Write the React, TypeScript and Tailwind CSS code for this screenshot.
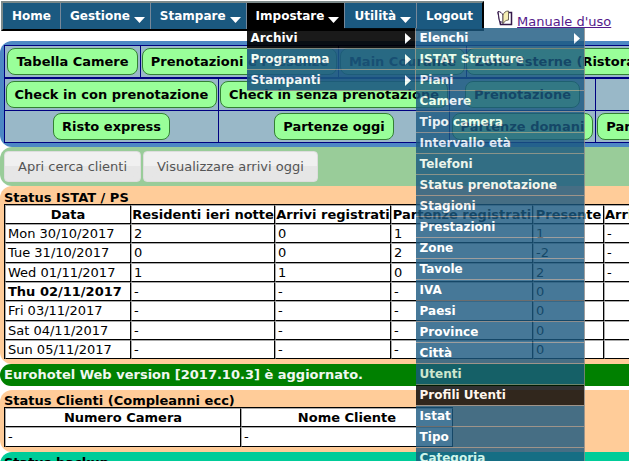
import clsx from 'clsx';

interface MenuEntry {
  label: string;
  active?: boolean;
  children?: MenuEntry[];
}

const ARCHIVI: MenuEntry[] = [
  { label: 'Elenchi', children: [] },
  { label: 'ISTAT Strutture' },
  { label: 'Piani' },
  { label: 'Camere' },
  { label: 'Tipo camera' },
  { label: 'Intervallo età' },
  { label: 'Telefoni' },
  { label: 'Status prenotazione' },
  { label: 'Stagioni' },
  { label: 'Prestazioni' },
  { label: 'Zone' },
  { label: 'Tavole' },
  { label: 'IVA' },
  { label: 'Paesi' },
  { label: 'Province' },
  { label: 'Città' },
  { label: 'Utenti' },
  { label: 'Profili Utenti', active: true },
  { label: 'Istat' },
  { label: 'Tipo' },
  { label: 'Categoria' },
];

const MENU: MenuEntry[] = [
  { label: 'Home' },
  { label: 'Gestione', children: [] },
  { label: 'Stampare', children: [] },
  {
    label: 'Impostare',
    active: true,
    children: [
      { label: 'Archivi', active: true, children: ARCHIVI },
      { label: 'Programma', children: [] },
      { label: 'Stampanti', children: [] },
    ],
  },
  { label: 'Utilità', children: [] },
  { label: 'Logout' },
];

const STATUS_HEAD = ['Data', 'Residenti ieri notte', 'Arrivi registrati', 'Partenze registrati', 'Presente', 'Arrivi previsti'];

const STATUS_ROWS = [
  ['Mon 30/10/2017', '2', '0', '1', '1', '-'],
  ['Tue 31/10/2017', '0', '0', '2', '-2', '-'],
  ['Wed 01/11/2017', '1', '1', '0', '2', '-'],
  ['Thu 02/11/2017', '-', '-', '-', '0', ''],
  ['Fri 03/11/2017', '-', '-', '-', '0', ''],
  ['Sat 04/11/2017', '-', '-', '-', '0', ''],
  ['Sun 05/11/2017', '-', '-', '-', '0', ''],
];
const TODAY = 'Thu 02/11/2017';

function SubMenu({ items, nested }: { items: MenuEntry[]; nested?: boolean }) {
  return (
    <ul className={clsx('absolute z-10 w-[169px] opacity-90', nested ? 'left-full top-0' : 'left-0 top-[25px]')}>
      {items.map(item => (
        <li key={item.label} className="relative">
          <a
            href="#"
            className={clsx(
              'flex h-[21px] items-center justify-between border-r border-b border-[#888888] px-1',
              item.active ? 'bg-black' : 'bg-[#1b5980]'
            )}
          >
            {item.label}
            {item.children && (
              <svg className="h-[11px] w-[6px]" viewBox="0 0 6 11" fill="white">
                <path d="M0 0L6 5.5L0 11Z" />
              </svg>
            )}
          </a>
          {item.children && item.children.length > 0 && <SubMenu items={item.children} nested />}
        </li>
      ))}
    </ul>
  );
}

function NavBar() {
  return (
    <nav className="border-2 border-t-[#7d8a8a] border-r-black border-b-black border-l-[#7d8a8a] bg-[#1b5980] text-xs font-bold text-white">
      <ul className="flex">
        {MENU.map(item => (
          <li key={item.label} className="relative border-r border-[#778899] last:border-r-0">
            <a href="#" className={clsx('flex h-[26px] items-center', item.children ? 'pr-[5px] pl-[9px]' : 'px-[9px]', item.active && 'bg-black')}>
              {item.label}
              {item.children && (
                <svg className="mt-2 ml-1 h-[6px] w-[11px]" viewBox="0 0 11 6" fill="white">
                  <path d="M0 0H11L5.5 6Z" />
                </svg>
              )}
            </a>
            {item.children && item.children.length > 0 && <SubMenu items={item.children} />}
          </li>
        ))}
      </ul>
    </nav>
  );
}

function BookIcon() {
  return (
    <svg className="h-4 w-4" viewBox="0 0 16 16">
      {/* cover */}
      <path d="M1 2L3.5 14.5H14.5V2.5H12" fill="#ffffff" stroke="#35194a" strokeWidth="1.5" />
      {/* pages */}
      <path d="M1 1.5C3.5 1.5 5 3 6 5V13.5C5 12 4 11.5 2.5 11.5Z" fill="#ffffff" stroke="#35194a" />
      <path d="M6 5C7 2.5 8.5 1 11.5 1V10C9 10 7.5 11.5 6 13.5Z" fill="#f6efb4" stroke="#6b6255" />
    </svg>
  );
}

function GreenButton({ children }: { children: string }) {
  return (
    <button
      type="button"
      className="block h-[27px] rounded-lg border border-[#338033] bg-[#99ff99] px-2 font-bold whitespace-nowrap text-black"
    >
      {children}
    </button>
  );
}

function ActionCell({ label }: { label?: string }) {
  return (
    <td className="h-8 border border-[#000080] p-0">
      <div className="flex justify-center">{label && <GreenButton>{label}</GreenButton>}</div>
    </td>
  );
}

function GrayButton({ children }: { children: string }) {
  return (
    <button
      type="button"
      className="h-[31px] rounded-sm border border-[#dddddd] bg-linear-to-b from-[#f0f0f0] from-50% to-[#e6e6e6] to-50% px-[13px] text-[#555555]"
    >
      {children}
    </button>
  );
}

const cell = 'border border-t-[#aaaaaa] border-l-[#aaaaaa] border-r-black border-b-black py-0 whitespace-nowrap';
const dataTable = 'table-fixed border-separate border-spacing-0 border-t border-l border-black bg-white leading-4';

export default function App() {
  return (
    <div className="h-screen overflow-hidden bg-white font-['DejaVu_Sans',Verdana,sans-serif] text-[13px] text-black">
      <header className="flex items-start pt-px pl-px">
        <NavBar />
        <a href="#" className="mt-[9px] ml-[13px] flex items-start gap-1 text-[#551a8b]">
          <BookIcon />
          <span className="leading-6 underline">Manuale d'uso</span>
        </a>
      </header>

      {/* Quick actions */}
      <section className="mt-[7px] overflow-hidden rounded-l-xl bg-[#4d88c4] p-1">
        <table className="w-[764px] table-fixed border-collapse bg-[#99b8c8]">
          <colgroup>
            <col className="w-[136px]" />
            <col className="w-[198px]" />
            <col className="w-[128px]" />
            <col />
          </colgroup>
          <tbody>
            <tr>
              <ActionCell label="Tabella Camere" />
              <ActionCell label="Prenotazioni e Presenze" />
              <ActionCell label="Main Courante" />
              <ActionCell label="Zone Esterne (Ristorante, Bar, Piscina)" />
            </tr>
          </tbody>
        </table>
        <table className="w-[774px] table-fixed border-collapse bg-[#99b8c8]">
          <colgroup>
            <col className="w-[214px]" />
            <col className="w-[231px]" />
            <col className="w-[146px]" />
            <col />
          </colgroup>
          <tbody>
            <tr>
              <ActionCell label="Check in con prenotazione" />
              <ActionCell label="Check in senza prenotazione" />
              <ActionCell label="Prenotazione" />
              <ActionCell />
            </tr>
            <tr>
              <ActionCell label="Risto express" />
              <ActionCell label="Partenze oggi" />
              <ActionCell label="Partenze domani" />
              <ActionCell label="Partenze dopodomani" />
            </tr>
          </tbody>
        </table>
      </section>

      <section className="flex gap-[2px] rounded-l-xl bg-[#99cc99] p-1">
        <GrayButton>Apri cerca clienti</GrayButton>
        <GrayButton>Visualizzare arrivi oggi</GrayButton>
      </section>

      {/* ISTAT status */}
      <section className="overflow-hidden rounded-l-xl bg-[#ffcc99] pt-[6px] pb-[5px] pl-1">
        <h2 className="leading-3 font-bold">Status ISTAT / PS</h2>
        <table className={clsx(dataTable, 'w-[760px]')}>
          <colgroup>
            <col className="w-[126px]" />
            <col className="w-[144px]" />
            <col className="w-[116px]" />
            <col className="w-[142px]" />
            <col className="w-[71px]" />
            <col />
          </colgroup>
          <thead>
            <tr>
              {STATUS_HEAD.map((h, i) => (
                <th key={h} className={clsx(cell, 'h-[19px] px-0', i === 5 && 'text-left')}>{h}</th>
              ))}
            </tr>
          </thead>
          <tbody>
            {STATUS_ROWS.map(row => (
              <tr key={row[0]} className="h-[19px] nth-[3n+2]:h-5">
                {row.map((value, i) => (
                  <td key={i} className={clsx(cell, 'px-[2px]', i === 0 && row[0] === TODAY && 'font-bold')}>
                    {value}
                  </td>
                ))}
              </tr>
            ))}
          </tbody>
        </table>
      </section>

      <p className="rounded-l-xl bg-[#008000] pl-1 leading-[22px] font-bold text-[#f0f8f0]">
        Eurohotel Web version [2017.10.3] è aggiornato.
      </p>

      {/* Guests */}
      <section className="mt-1 rounded-l-xl bg-[#ffcc99] pt-[5px] pb-[5px] pl-1">
        <h2 className="leading-3 font-bold">Status Clienti (Compleanni ecc)</h2>
        <table className={clsx(dataTable, 'w-[449px]')}>
          <thead>
            <tr>
              <th className={clsx(cell, 'h-[19px] w-[236px] px-0')}>Numero Camera</th>
              <th className={clsx(cell, 'h-[19px] px-0')}>Nome Cliente</th>
            </tr>
          </thead>
          <tbody>
            <tr>
              <td className={clsx(cell, 'h-5 px-[2px]')}>-</td>
              <td className={clsx(cell, 'h-5 px-[2px]')}>-</td>
            </tr>
          </tbody>
        </table>
      </section>

      <section className="rounded-l-xl bg-[#00cc99] pt-[5px] pb-3 pl-1">
        <h2 className="leading-3 font-bold">Status backup</h2>
      </section>
    </div>
  );
}
